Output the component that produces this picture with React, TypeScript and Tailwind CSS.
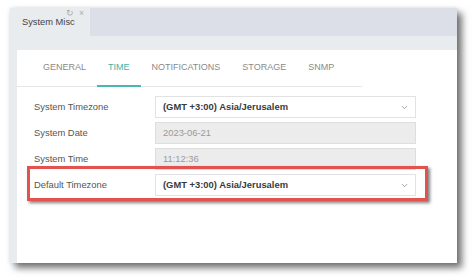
import { ChevronDown } from "lucide-react";

const tabs = ["GENERAL", "TIME", "NOTIFICATIONS", "STORAGE", "SNMP"];

function SelectBox({ value }: { value: string }) {
    return (
        <div className="flex h-[22px] w-[261px] items-center justify-between border border-[#e2e2e2] bg-white pl-[7px] pr-[6px]">
            <span className="text-[9.4px] font-bold text-[#3a3a3a]">{value}</span>
            <ChevronDown size={9} strokeWidth={1.6} className="text-[#666]" />
        </div>
    );
}

function ReadOnlyBox({ value }: { value: string }) {
    return (
        <div className="flex h-[22px] w-[261px] items-center border border-[#dedede] bg-[#ececec] pl-[7px]">
            <span className="text-[9.4px] text-[#9a9a9a]">{value}</span>
        </div>
    );
}

function Row({ label, children }: { label: string; children: React.ReactNode }) {
    return (
        <div className="flex items-center">
            <div className="w-[121px] text-[9.4px] text-[#555]">{label}</div>
            {children}
        </div>
    );
}

export default function App() {
    return (
        <div
            className="relative h-[280px] w-[474px] bg-white pl-[10px] pt-[8px]"
            style={{ fontFamily: '"Liberation Sans", Arial, sans-serif' }}
        >
            <div className="flex h-[255px] w-[447px] flex-col shadow-[5px_5px_7px_rgba(0,0,0,0.55),0_0_4px_rgba(0,0,0,0.12)]">
                <div className="flex h-[28px] bg-[#dcdfe8]">
                    <div className="relative flex w-[80px] items-start bg-[#e9ecef] pl-[12px] pt-[9px]">
                        <span className="text-[9.3px] leading-[11px] text-[#444]">System Misc</span>
                        <div className="absolute left-[56px] top-[1px] flex items-center gap-[5px] text-[8.5px] leading-none text-[#aaa]">
                            <span>↻</span>
                            <span>×</span>
                        </div>
                    </div>
                </div>
                <div className="h-[14px] bg-[#e9ecef]" />
                <div className="flex flex-1">
                    <div className="w-[7px] bg-[#e9ecef]" />
                    <div className="flex-1 bg-white">
                        <div className="flex w-[345px] border-b border-[#e6e6e6] pl-[15px]">
                            {tabs.map((tab) => (
                                <div
                                    key={tab}
                                    className={
                                        tab === "TIME"
                                            ? "-mb-px border-b-2 border-[#4bb8ad] px-[11px] pb-[12px] pt-[11px] text-[9px] leading-[12px] text-[#3fb2a6]"
                                            : "-mb-px border-b-2 border-transparent px-[11px] pb-[12px] pt-[11px] text-[9px] leading-[12px] text-[#8a8a8a]"
                                    }
                                >
                                    {tab}
                                </div>
                            ))}
                        </div>
                        <div className="flex flex-col gap-[4px] pl-[17px] pt-[9px]">
                            <Row label="System Timezone">
                                <SelectBox value="(GMT +3:00) Asia/Jerusalem" />
                            </Row>
                            <Row label="System Date">
                                <ReadOnlyBox value="2023-06-21" />
                            </Row>
                            <Row label="System Time">
                                <ReadOnlyBox value="11:12:36" />
                            </Row>
                            <Row label="Default Timezone">
                                <SelectBox value="(GMT +3:00) Asia/Jerusalem" />
                            </Row>
                        </div>
                    </div>
                </div>
            </div>
            <div className="absolute left-[27px] top-[166px] h-[35px] w-[401px] border-[3px] border-[#e0534f] shadow-[2px_2px_3px_rgba(0,0,0,0.5)]" />
        </div>
    );
}
